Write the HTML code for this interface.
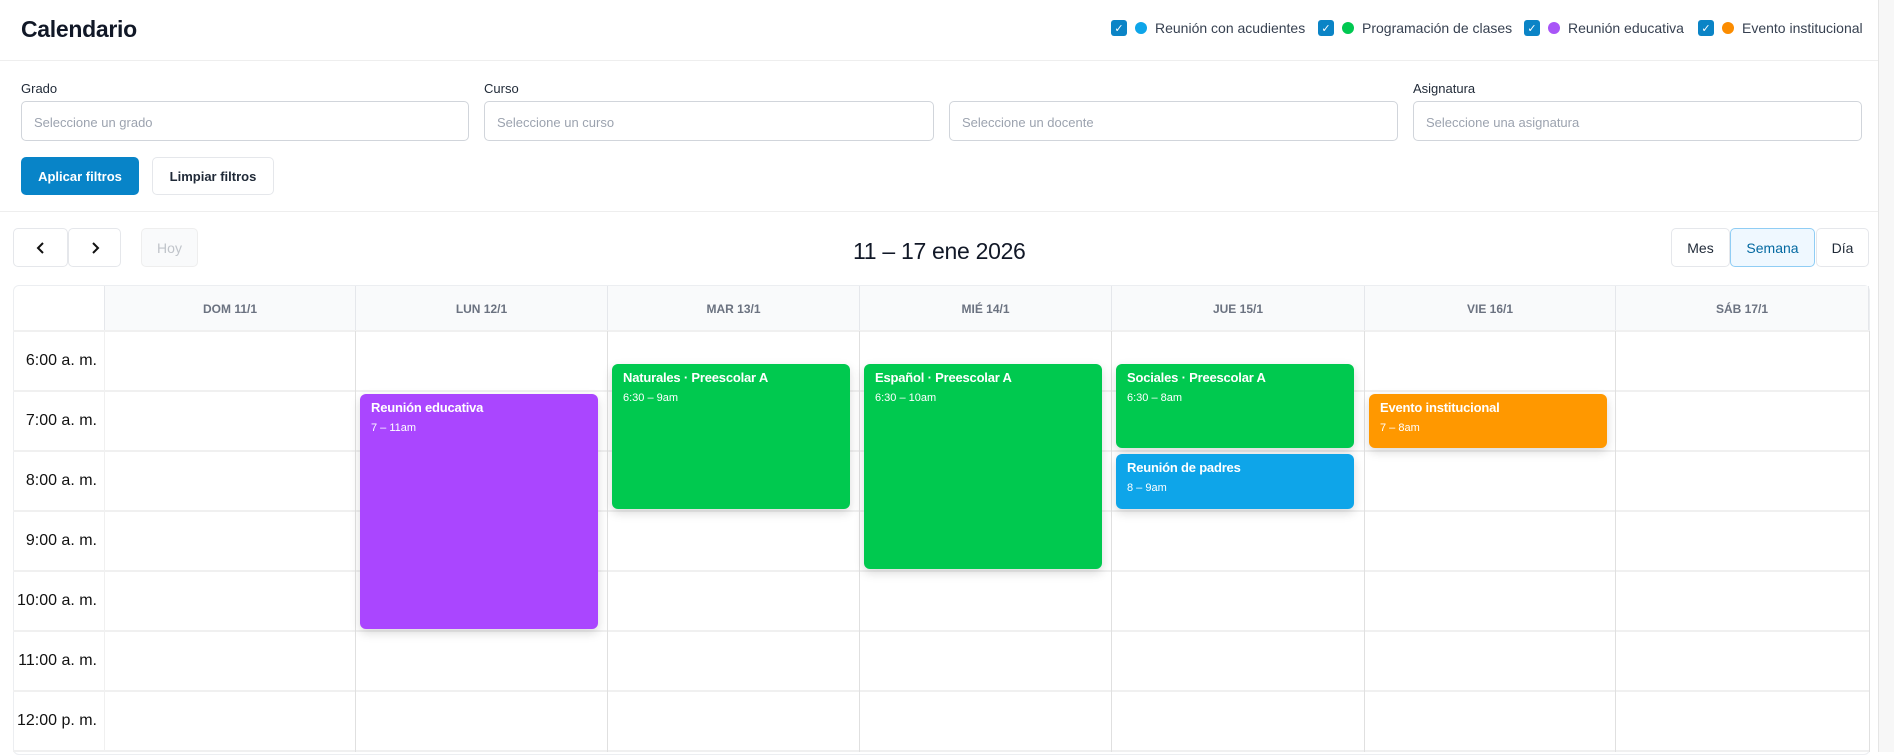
<!DOCTYPE html>
<html><head><meta charset="utf-8"><style>
*{box-sizing:border-box;margin:0;padding:0}
body{width:1894px;height:752px;overflow:hidden;background:#fff;font-family:"Liberation Sans",sans-serif;position:relative;color:#111827}
.a{position:absolute}
.lbl{font-size:13px;color:#1f2937;top:81px;font-weight:500}
.inp{top:101px;height:40px;border:1px solid #d1d5db;border-radius:5px;font-size:13px;color:#9ca3af;padding:13px 12px}
.btn{border:1px solid #e5e7eb;border-radius:5px;background:#fff;font-size:14px;display:flex;align-items:center;justify-content:center}
.lg{top:20px;height:16px;display:flex;align-items:center;font-size:14px;color:#374151}
.cb{width:16px;height:16px;background:#0b84c6;border-radius:3px;color:#fff;font-size:11px;display:flex;align-items:center;justify-content:center;margin-right:8px}
.dot{width:12px;height:12px;border-radius:50%;margin-right:8px}
.hd{top:286px;height:45px;font-size:12px;font-weight:bold;color:#6b7280;display:flex;align-items:center;justify-content:center;background:#f9fafb;border-left:1px solid #e5e7eb}
.vl{top:331px;width:1px;height:421px;background:#e0e0e0}
.hl{left:13px;width:1856px;height:2px;background:#f0f0f0}
.tm{left:13px;width:84px;text-align:right;font-size:16px;color:#111}
.ev{border-radius:6px;color:#fff;padding:6px 11px;box-shadow:0 4px 10px rgba(0,0,0,.15)}
.ev b{display:block;font-size:13px;margin-bottom:3px;letter-spacing:-0.2px}
.ev span{font-size:11px}
</style></head><body>
<div class="a" style="left:21px;top:16px;font-size:23px;font-weight:bold;color:#111827;letter-spacing:-0.3px">Calendario</div>
<div class="a lg" style="left:1111px"><div class="cb">✓</div><div class="dot" style="background:#0ea5e9"></div>Reunión con acudientes</div>
<div class="a lg" style="left:1318px"><div class="cb">✓</div><div class="dot" style="background:#00c851"></div>Programación de clases</div>
<div class="a lg" style="left:1524px"><div class="cb">✓</div><div class="dot" style="background:#a855f7"></div>Reunión educativa</div>
<div class="a lg" style="left:1698px"><div class="cb">✓</div><div class="dot" style="background:#fb8c00"></div>Evento institucional</div>
<div class="a" style="left:0;top:60px;width:1878px;height:1px;background:#eee"></div>
<div class="a lbl" style="left:21px">Grado</div>
<div class="a lbl" style="left:484px">Curso</div>
<div class="a lbl" style="left:1413px">Asignatura</div>
<div class="a inp" style="left:21px;width:448px">Seleccione un grado</div>
<div class="a inp" style="left:484px;width:450px">Seleccione un curso</div>
<div class="a inp" style="left:949px;width:449px">Seleccione un docente</div>
<div class="a inp" style="left:1413px;width:449px">Seleccione una asignatura</div>
<div class="a btn" style="left:21px;top:157px;width:118px;height:38px;background:#0884c8;border-color:#0884c8;color:#fff;font-weight:bold;font-size:13px">Aplicar filtros</div>
<div class="a btn" style="left:152px;top:157px;width:122px;height:38px;color:#1f2937;font-weight:bold;font-size:13px">Limpiar filtros</div>
<div class="a" style="left:0;top:211px;width:1878px;height:1px;background:#eee"></div>
<div class="a btn" style="left:13px;top:228px;width:55px;height:39px;color:#111"><svg width="10" height="16" viewBox="0 0 10 16"><path d="M7 3L2 8l5 5" fill="none" stroke="#111" stroke-width="2"/></svg></div>
<div class="a btn" style="left:68px;top:228px;width:53px;height:39px;color:#111"><svg width="10" height="16" viewBox="0 0 10 16"><path d="M3 3l5 5-5 5" fill="none" stroke="#111" stroke-width="2"/></svg></div>
<div class="a btn" style="left:141px;top:228px;width:57px;height:39px;background:#f9fafb;color:#c0c4ca;border-color:#eee">Hoy</div>
<div class="a" style="left:853px;top:238px;font-size:23px;font-weight:500;color:#111827;letter-spacing:-0.3px">11 – 17 ene 2026</div>
<div class="a btn" style="left:1671px;top:228px;width:59px;height:39px;color:#1f2937">Mes</div>
<div class="a btn" style="left:1730px;top:228px;width:85px;height:39px;color:#0369a1;background:#eff8ff;border-color:#90cdf4">Semana</div>
<div class="a btn" style="left:1816px;top:228px;width:53px;height:39px;color:#1f2937">Día</div>
<div class="a" style="left:13px;top:285px;width:1857px;height:470px;border:1px solid #eceef1;border-radius:6px"></div>
<div class="a hd" style="left:104px;width:251px">DOM 11/1</div>
<div class="a hd" style="left:355px;width:252px">LUN 12/1</div>
<div class="a hd" style="left:607px;width:252px">MAR 13/1</div>
<div class="a hd" style="left:859px;width:252px">MIÉ 14/1</div>
<div class="a hd" style="left:1111px;width:253px">JUE 15/1</div>
<div class="a hd" style="left:1364px;width:251px">VIE 16/1</div>
<div class="a hd" style="left:1615px;width:254px;border-right:1px solid #e5e7eb">SÁB 17/1</div>
<div class="a hl" style="top:330px"></div><div class="a hl" style="top:390px"></div><div class="a hl" style="top:450px"></div><div class="a hl" style="top:510px"></div><div class="a hl" style="top:570px"></div><div class="a hl" style="top:630px"></div><div class="a hl" style="top:690px"></div><div class="a hl" style="top:750px"></div>
<div class="a vl" style="left:104px;background:#f0f0f0"></div><div class="a vl" style="left:355px"></div><div class="a vl" style="left:607px"></div><div class="a vl" style="left:859px"></div><div class="a vl" style="left:1111px"></div><div class="a vl" style="left:1364px"></div><div class="a vl" style="left:1615px"></div><div class="a vl" style="left:1869px"></div>
<div class="a tm" style="top:352px">6:00 a. m.</div>
<div class="a tm" style="top:412px">7:00 a. m.</div>
<div class="a tm" style="top:472px">8:00 a. m.</div>
<div class="a tm" style="top:532px">9:00 a. m.</div>
<div class="a tm" style="top:592px">10:00 a. m.</div>
<div class="a tm" style="top:652px">11:00 a. m.</div>
<div class="a tm" style="top:712px">12:00 p. m.</div>
<div class="a ev" style="left:360px;top:394px;width:238px;height:235px;background:#aa46ff"><b>Reunión educativa</b><span>7 – 11am</span></div>
<div class="a ev" style="left:612px;top:364px;width:238px;height:145px;background:#00c94f"><b>Naturales · Preescolar A</b><span>6:30 – 9am</span></div>
<div class="a ev" style="left:864px;top:364px;width:238px;height:205px;background:#00c94f"><b>Español · Preescolar A</b><span>6:30 – 10am</span></div>
<div class="a ev" style="left:1116px;top:364px;width:238px;height:84px;background:#00c94f"><b>Sociales · Preescolar A</b><span>6:30 – 8am</span></div>
<div class="a ev" style="left:1116px;top:454px;width:238px;height:55px;background:#0ea5e9"><b>Reunión de padres</b><span>8 – 9am</span></div>
<div class="a ev" style="left:1369px;top:394px;width:238px;height:54px;background:#ff9800"><b>Evento institucional</b><span>7 – 8am</span></div>
<div class="a" style="left:1878px;top:0;width:16px;height:752px;background:#f7f7f7;border-left:1px solid #e5e5e5"></div>
</body></html>
